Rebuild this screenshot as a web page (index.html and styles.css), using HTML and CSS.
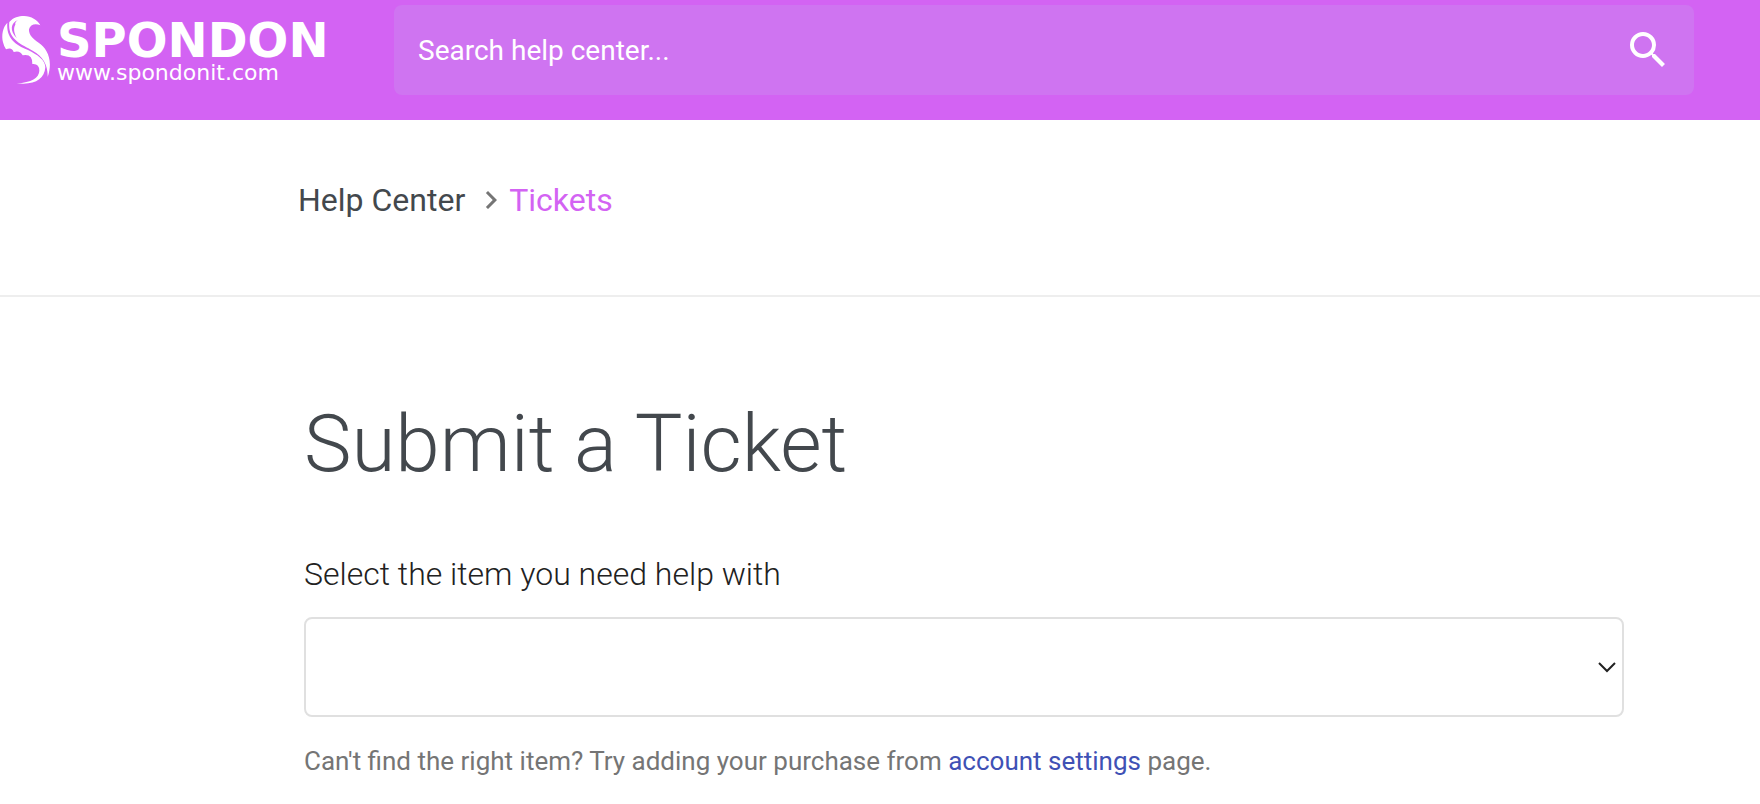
FILE: index.html
```html
<!DOCTYPE html>
<html lang="en">
<head>
    <meta charset="UTF-8">
    <title>Submit a Ticket</title>
    <link rel="stylesheet" href="styles.css">
</head>
<body>
<header class="header">
    <a class="logo" href="#">
        <svg class="logo-mark" viewBox="0 24 156 216" width="52" height="72" aria-hidden="true">
            <path fill="#fff" d="M22 44C8 58 4 82 9 103Q12 116 18 124Q36 116 41 132Q60 126 68 142Q98 136 97 168Q118 166 118 188C117 210 95 223 50 226C105 232 133 214 136 178C136 156 112 140 84 126C46 110 18 90 22 44z"/>
            <path fill="#fff" d="M28 42C40 28 56 24 72 24C94 25 112 35 121 52C106 45 90 50 87 64C86 80 98 92 116 104C142 122 160 156 143 207C144 170 130 147 98 128C62 108 22 94 28 42z"/>
            <path fill="#d363f3" d="M54 36C32 44 28 68 50 90C40 70 41 58 46 50Q44 42 54 36z"/>
        </svg>
        <span class="logo-text">
            <span class="logo-name">SPONDON</span>
            <span class="logo-url">www.spondonit.com</span>
        </span>
    </a>
    <form class="search">
        <input type="text" name="search" placeholder="Search help center..." aria-label="Search help center">
        <button type="submit" aria-label="Search">
            <svg viewBox="0 0 24 24" width="48" height="48">
                <path fill="#fff" d="M15.5 14h-.79l-.28-.27A6.47 6.47 0 0 0 16 9.5 6.5 6.5 0 1 0 9.5 16c1.61 0 3.09-.59 4.23-1.57l.27.28v.79l5 4.99L20.49 19l-4.99-5zm-6 0C7.01 14 5 11.99 5 9.5S7.01 5 9.5 5 14 7.01 14 9.5 11.99 14 9.5 14z"/>
            </svg>
        </button>
    </form>
</header>

<nav class="breadcrumb">
    <a href="#">Help Center</a>
    <svg viewBox="0 0 24 24" width="36" height="36" aria-hidden="true">
        <path fill="#757575" d="M10 6 8.59 7.41 13.17 12l-4.58 4.59L10 18l6-6z"/>
    </svg>
    <a class="active" href="#">Tickets</a>
</nav>

<main class="container">
    <h1>Submit a Ticket</h1>
    <form>
        <label for="item">Select the item you need help with</label>
        <div class="select-box">
            <select id="item" name="item">
                <option value=""></option>
            </select>
            <svg viewBox="0 0 18 12" width="18" height="12" aria-hidden="true">
                <path fill="none" stroke="#212121" stroke-width="2" d="M1 2l8 8 8-8"/>
            </svg>
        </div>
        <p class="hint">Can't find the right item? Try adding your purchase from <a href="#">account settings</a> page.</p>
    </form>
</main>
</body>
</html>
```

FILE: styles.css
```css
* {
    box-sizing: border-box;
}

body {
    margin: 0;
    font-family: Roboto, sans-serif;
    color: #212121;
    background-color: white;
}

a {
    text-decoration: none;
}

.header {
    display: flex;
    align-items: flex-start;
    gap: 64px;
    padding: 5px 66px 25px 0;
    background-color: #d363f3;
}

.logo {
    display: flex;
    gap: 5px;
    width: 330px;
    padding-top: 11px;
    color: white;
    font-family: "DejaVu Sans", sans-serif;
}

.logo-mark {
    flex: none;
}

.logo-text {
    display: flex;
    flex-direction: column;
}

.logo-name {
    font-size: 48px;
    font-weight: bold;
    line-height: 48px;
}

.logo-url {
    font-size: 22px;
    line-height: 18px;
}

.search {
    display: flex;
    flex: 1;
    align-items: center;
    height: 90px;
    padding: 0 22px 0 24px;
    border-radius: 8px;
    background-color: #cf74f1;
}

.search input {
    flex: 1;
    min-width: 0;
    padding: 0;
    border: none;
    outline: none;
    background: none;
    color: white;
    font-family: inherit;
    font-size: 28px;
}

.search input::placeholder {
    color: white;
}

.search button {
    padding: 0;
    border: none;
    background: none;
    cursor: pointer;
}

.search svg {
    display: block;
}

.breadcrumb {
    display: flex;
    align-items: center;
    padding: 60px 136px 75px 298px;
    border-bottom: 2px solid #eee;
    font-size: 32px;
    line-height: 40px;
}

.breadcrumb a {
    color: #43484d;
}

.breadcrumb svg {
    margin-left: 8px;
}

.breadcrumb a.active {
    color: #d363f3;
}

.container {
    padding: 97px 136px 24px 304px;
}

h1 {
    margin: 0 0 60px;
    color: #43484d;
    font-size: 80px;
    font-weight: 300;
    line-height: 100px;
}

label {
    display: block;
    margin-bottom: 23px;
    font-size: 32px;
    font-weight: 300;
    line-height: 40px;
}

.select-box {
    position: relative;
}

.select-box select {
    display: block;
    width: 100%;
    height: 100px;
    padding: 0 40px 0 16px;
    border: 2px solid #e0e0e0;
    border-radius: 8px;
    appearance: none;
    background-color: white;
    font-family: inherit;
    font-size: 28px;
}

.select-box svg {
    position: absolute;
    top: 44px;
    right: 8px;
    pointer-events: none;
}

.hint {
    margin: 28px 0 0;
    color: #757575;
    font-size: 26px;
    line-height: 32px;
}

.hint a {
    color: #3f51b5;
}
```
